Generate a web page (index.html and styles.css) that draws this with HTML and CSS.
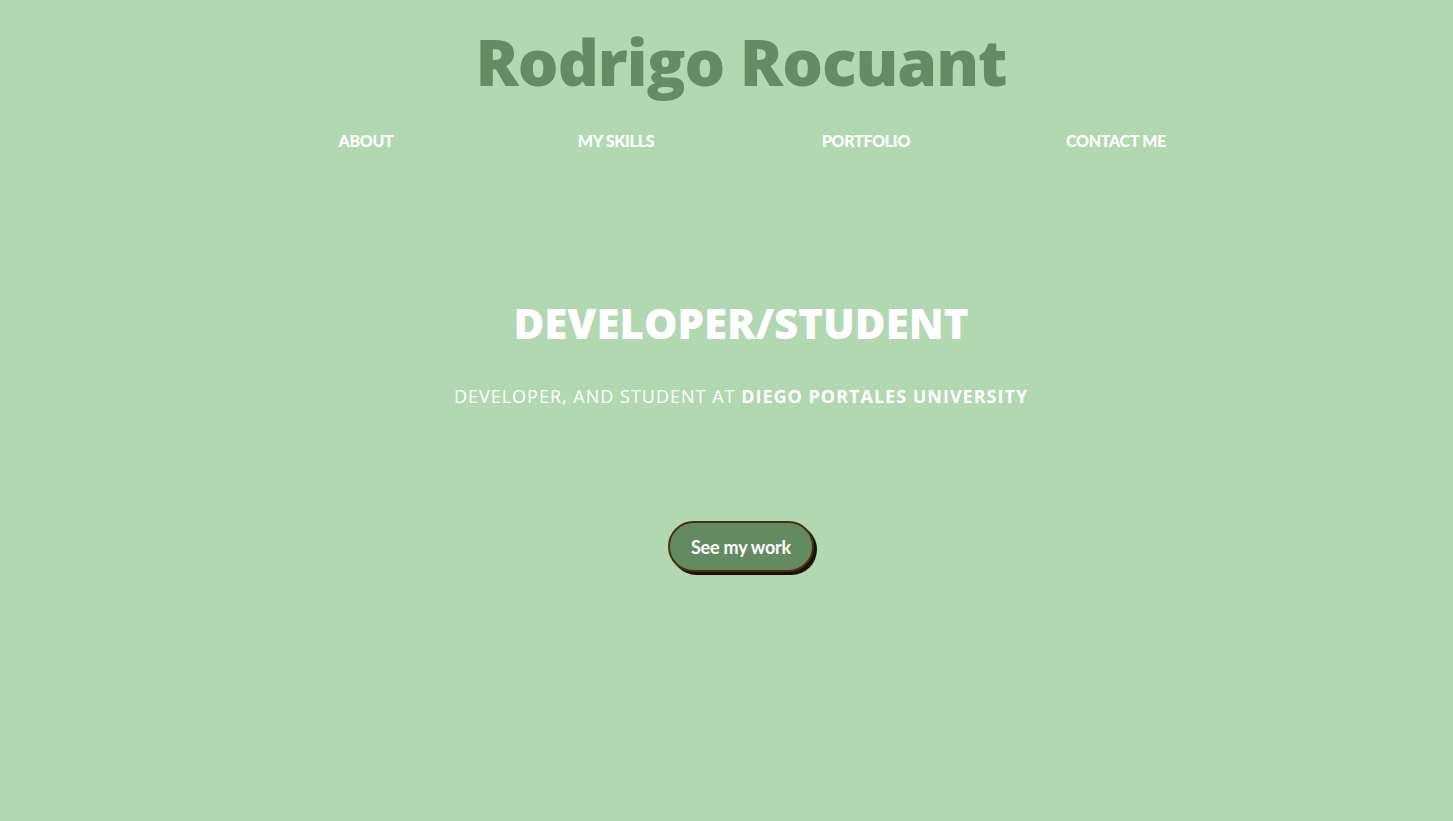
FILE: index.html
```html
<!DOCTYPE html>
<html lang="en">
<head>
<meta charset="utf-8">
<title>Rodrigo Rocuant</title>
<link rel="stylesheet" href="styles.css">
</head>
<body>
<div class="page">
  <header class="header">
    <h1 class="title">Rodrigo Rocuant</h1>
    <nav class="nav">
      <a class="nav-link" href="#about">ABOUT</a>
      <a class="nav-link" href="#skills">MY SKILLS</a>
      <a class="nav-link" href="#portfolio">PORTFOLIO</a>
      <a class="nav-link" href="#contact">CONTACT ME</a>
    </nav>
  </header>
  <section class="hero">
    <h2 class="hero-title">DEVELOPER/STUDENT</h2>
    <p class="hero-sub">DEVELOPER, AND STUDENT AT <strong>DIEGO PORTALES UNIVERSITY</strong></p>
    <a class="btn" href="#portfolio">See my work</a>
  </section>
</div>
</body>
</html>
```
FILE: styles.css
```css
html, body {
  margin: 0;
  padding: 0;
  background: #b1d8b0;
}
body {
  font-family: Lato, "Open Sans", sans-serif;
  color: #fff;
}
.page {
  padding-left: 29px;
  min-height: 821px;
  box-sizing: border-box;
}
.header {
  display: flex;
  flex-direction: column;
  align-items: center;
}
.title {
  margin: 22px 0 0;
  font-family: "Open Sans", sans-serif;
  font-weight: 800;
  font-size: 64px;
  line-height: 80px;
  color: #668b64;
  letter-spacing: -1px;
}
.nav {
  display: flex;
  width: 1000px;
  margin-top: 29px;
}
.nav-link {
  flex: 1;
  text-align: center;
  color: #fff;
  text-decoration: none;
  font-weight: 900;
  font-size: 16px;
  line-height: 20px;
  letter-spacing: -0.3px;
}
.hero {
  display: flex;
  flex-direction: column;
  align-items: center;
}
.hero-title {
  margin: 147px 0 0;
  font-family: "Open Sans", sans-serif;
  font-weight: 800;
  font-size: 42px;
  line-height: 50px;
  letter-spacing: 0;
}
.hero-sub {
  margin: 36px 0 0;
  font-family: "Open Sans", sans-serif;
  font-weight: 400;
  font-size: 18px;
  line-height: 24px;
  letter-spacing: 1px;
}
.hero-sub strong {
  font-weight: 700;
}
.btn {
  margin-top: 113px;
  display: inline-flex;
  align-items: center;
  justify-content: center;
  width: 146px;
  height: 51px;
  box-sizing: border-box;
  background: #648a62;
  border: 2px solid #4a2f10;
  border-radius: 26px;
  box-shadow: 3px 3px 0 #1a1208;
  color: #fff;
  text-decoration: none;
  font-family: Lato, sans-serif;
  font-weight: 700;
  font-size: 18px;
  letter-spacing: -0.2px;
}
```
